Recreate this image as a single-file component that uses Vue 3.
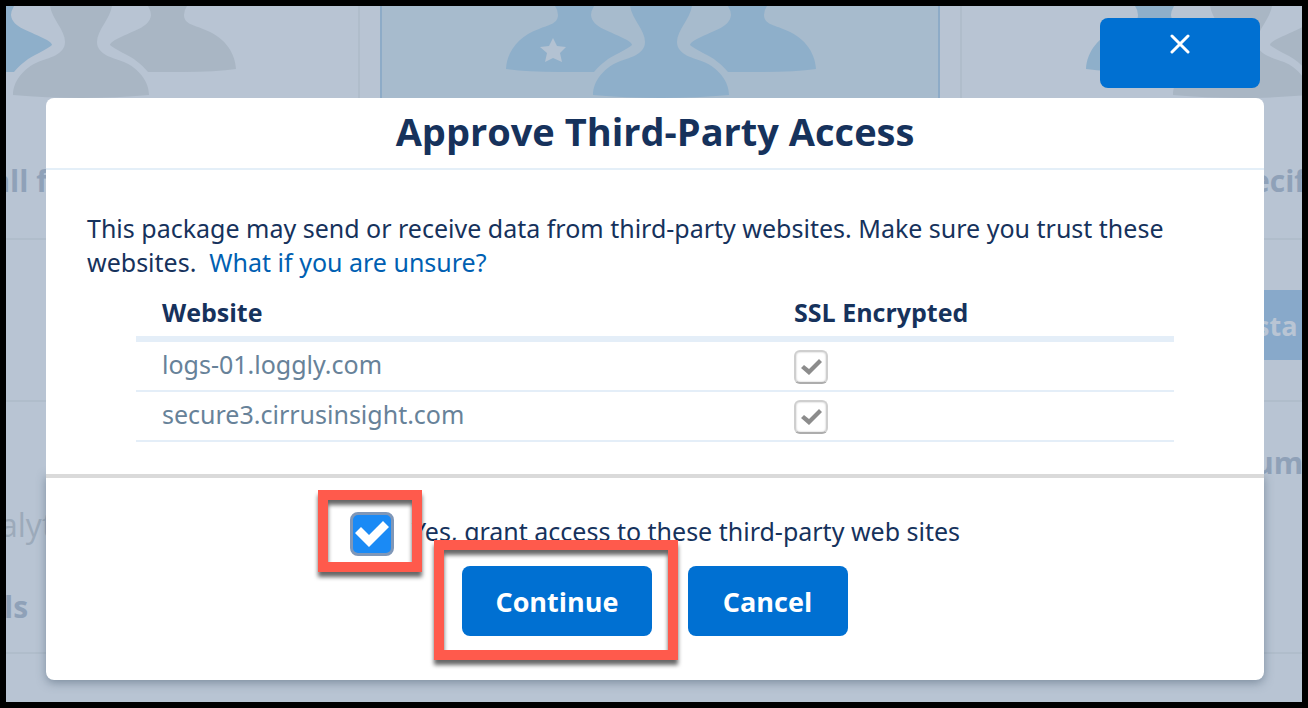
<script setup>
import { ref } from 'vue'

const granted = ref(true)
const sites = [
  { host: 'logs-01.loggly.com', ssl: true },
  { host: 'secure3.cirrusinsight.com', ssl: true }
]
const audiences = [
  { id: 'all', left: 'blue', rest: 'gray', star: false },
  { id: 'admins', left: 'blue', rest: 'blue', star: true },
  { id: 'specific', left: 'blue', rest: 'gray', star: false }
]
</script>

<template>
  <div class="stage">
    <div class="backdrop" aria-hidden="true">
      <div v-for="a in audiences" :key="a.id" class="card" :class="a.id">
        <svg class="people" viewBox="0 0 310 92" width="310" height="92">
          <g :class="a.left">
            <path d="M88 0Q85 5 85 9C86 22 105 25 121 34Q126 37 126 39Q124 41 113 47C102 52 95 58 88 66H53Q20 66 0 63C1 45 13 30 33 23C42 19 52 18 52 9Q52 4 49 0Z" />
          </g>
          <g :class="a.rest">
            <path d="M222 0Q225 5 225 9C224 22 205 25 189 34Q184 37 184 39Q186 41 197 47C208 52 215 58 222 66H257Q290 66 310 63C309 45 297 30 277 23C268 19 258 18 258 9Q258 4 261 0Z" />
            <path d="M124 0C126 13 139 24 139 36C139 49 122 52 112 56C98 62 87 75 87 89Q120 92 155 92Q190 92 223 89C223 75 212 62 198 56C188 52 171 49 171 36C171 24 184 13 186 0Z" />
          </g>
          <path v-if="a.star" class="star" d="M47 32L51 40L60 41L54 47L56 56L47 52L39 56L41 47L34 41L43 40Z" />
        </svg>
        <div class="row title">
          <span v-if="a.id === 'all'">all f</span>
          <span v-if="a.id === 'specific'">ecif</span>
        </div>
        <div class="row action">
          <span v-if="a.id === 'specific'" class="install">sta</span>
        </div>
        <div class="row details">
          <template v-if="a.id === 'all'">
            <span class="plain">alyt</span>
            <span class="tail">ls</span>
          </template>
          <span v-if="a.id === 'specific'" class="heading">um</span>
        </div>
      </div>
    </div>

    <div class="close-bar">
      <button class="btn close" type="button" aria-label="Close">
        <svg viewBox="0 0 20 20" width="20" height="20">
          <path d="M2 2L18 18M18 2L2 18" />
        </svg>
      </button>
    </div>

    <section class="modal" role="dialog" aria-labelledby="dialog-title">
      <header><h1 id="dialog-title">Approve Third-Party Access</h1></header>
      <div class="body">
        <p>
          This package may send or receive data from third-party websites. Make sure you trust these
          websites.&nbsp; <a href="#">What if you are unsure?</a>
        </p>
        <table>
          <thead>
            <tr><th scope="col">Website</th><th scope="col">SSL Encrypted</th></tr>
          </thead>
          <tbody>
            <tr v-for="s in sites" :key="s.host">
              <td>{{ s.host }}</td>
              <td>
                <span class="ssl">
                  <input type="checkbox" :checked="s.ssl" disabled :aria-label="s.host" />
                  <svg viewBox="0 0 34 34" width="34" height="34">
                    <path d="M7 18L10 15L15 19L25 9L28 12L15 25Z" />
                  </svg>
                </span>
              </td>
            </tr>
          </tbody>
        </table>
      </div>
      <footer>
        <div class="grant">
          <span class="tick">
            <input id="grant" v-model="granted" type="checkbox" />
            <svg v-if="granted" viewBox="0 0 44 44" width="44" height="44">
              <path d="M5 21L11 15L19 23L33 9L39 15L19 35Z" />
            </svg>
            <span class="mark"></span>
          </span>
          <label for="grant">Yes, grant access to these third-party web sites</label>
        </div>
        <div class="actions">
          <span class="primary">
            <button class="btn" type="button">Continue</button>
            <span class="mark"></span>
          </span>
          <button class="btn" type="button">Cancel</button>
        </div>
      </footer>
    </section>
  </div>
</template>

<style>
body {
  margin: 0;
}
</style>

<style scoped>
.stage {
  box-sizing: border-box;
  min-height: 100vh;
  border: 6px solid #000;
  position: relative;
  overflow: hidden;
  background: #b8c4d3;
  color: #16325c;
  font-family: "Noto Sans", "Open Sans", sans-serif;
  font-size: 25px;
  line-height: 34px;
}
.backdrop {
  position: absolute;
  inset: 0;
  display: grid;
  grid-template-columns: repeat(3, 560px);
  justify-content: center;
  align-items: start;
  gap: 20px;
  padding-left: 12px;
  overflow: hidden;
  color: #8fa1b8;
  font-family: "Open Sans", "Noto Sans", sans-serif;
  font-size: 30px;
  font-weight: 700;
}
.card {
  box-sizing: border-box;
  border: 2px solid #b0bdcb;
  border-width: 0 2px;
}
.card.admins {
  background: #a7bbcd;
  border-color: #8dabc7;
}
.people {
  display: block;
  margin-left: 124px;
}
.blue {
  fill: #8eafca;
}
.gray {
  fill: #a9b6c4;
}
.star {
  fill: #b3c2d2;
}
.row {
  box-sizing: border-box;
  border-bottom: 2px solid #b0bdcb;
}
.row span {
  display: block;
}
.title {
  height: 142px;
  padding-top: 66px;
}
.action {
  height: 162px;
  padding-top: 50px;
}
.details {
  height: 252px;
  padding-top: 44px;
}
.all .row {
  padding-left: 190px;
}
.specific .row {
  padding-left: 290px;
}
.specific .install {
  padding-left: 4px;
  background: #88a9ca;
  color: #b9c5d4;
  font-size: 27px;
  line-height: 72px;
  height: 70px;
}
.all .plain {
  padding: 62px 0 48px 8px;
  font-size: 32px;
  font-weight: 400;
  color: #9caaba;
}
.all .tail {
  padding-left: 12px;
}
.specific .heading {
  padding-left: 2px;
}
.close-bar {
  display: flex;
  justify-content: flex-end;
  padding: 12px 42px 10px;
}
.btn {
  min-width: 160px;
  height: 70px;
  padding: 0 33px;
  border: 0;
  border-radius: 8px;
  background: #0070d2;
  color: #fff;
  font: 700 27px/72px "Open Sans", "Noto Sans", sans-serif;
}
.close {
  display: flex;
  justify-content: center;
  align-items: flex-start;
  padding-top: 16px;
  position: relative;
}
.close path {
  fill: none;
  stroke: #fff;
  stroke-width: 3;
  stroke-linecap: round;
}
.modal {
  position: relative;
  margin: 0 38px 22px 40px;
  border-radius: 8px;
  background: #fff;
}
header {
  height: 70px;
  border-bottom: 2px solid #e4eff8;
}
h1 {
  margin: 0;
  text-align: center;
  font-family: "Open Sans", "Noto Sans", sans-serif;
  font-size: 38px;
  line-height: 66px;
}
.body {
  position: relative;
  z-index: 1;
  background: #fff;
  padding: 41px 72px 32px 41px;
}
p {
  margin: 0;
}
a {
  color: #005fb2;
  text-decoration: none;
}
table {
  width: calc(100% - 67px);
  margin: 16px 18px 0 49px;
  border-collapse: separate;
  border-spacing: 0;
  table-layout: fixed;
}
th,
td {
  box-sizing: border-box;
  padding: 0 0 0 26px;
  text-align: left;
  vertical-align: top;
}
th {
  height: 47px;
  font-family: "Open Sans", "Noto Sans", sans-serif;
  border-bottom: 6px solid #e4eef8;
}
th:first-child {
  width: 632px;
}
td {
  height: 50px;
  padding-top: 5px;
  border-bottom: 2px solid #e4eef8;
  color: #678299;
}
.ssl,
.tick,
.primary {
  display: block;
  position: relative;
}
.ssl {
  width: 34px;
  margin-top: 3px;
}
input {
  appearance: none;
  display: block;
  box-sizing: border-box;
  margin: 0;
}
.ssl input {
  width: 34px;
  height: 34px;
  border: 2px solid #cfcfcf;
  border-bottom-color: #adadad;
  border-radius: 6px;
  background: #fff;
  box-shadow: inset 0 0 2px #bbb;
}
.ssl svg,
.tick svg {
  position: absolute;
  inset: 0;
  pointer-events: none;
}
.ssl path {
  fill: #8c8c8c;
}
footer {
  padding: 34px 0 44px;
  border-top: 4px solid #dadada;
  border-radius: 0 0 8px 8px;
  box-shadow: 0 3px 10px rgba(70, 90, 110, 0.5);
}
.grant {
  display: flex;
  justify-content: center;
  gap: 18px;
}
.tick input {
  width: 44px;
  height: 44px;
  border: 3px solid #7f97b8;
  border-radius: 8px;
  background: #1a8af5;
}
.tick path {
  fill: #fff;
}
label {
  padding-top: 2px;
}
.mark {
  position: absolute;
  z-index: 1;
  inset: -22px -28px -16px -32px;
  border: 10px solid #ff5a4c;
  filter: drop-shadow(0 5px 2px rgba(0, 0, 0, 0.6));
  pointer-events: none;
}
.primary .mark {
  inset: -26px -26px -24px -28px;
}
.actions {
  display: flex;
  justify-content: center;
  gap: 36px;
  padding-top: 10px;
}
</style>
